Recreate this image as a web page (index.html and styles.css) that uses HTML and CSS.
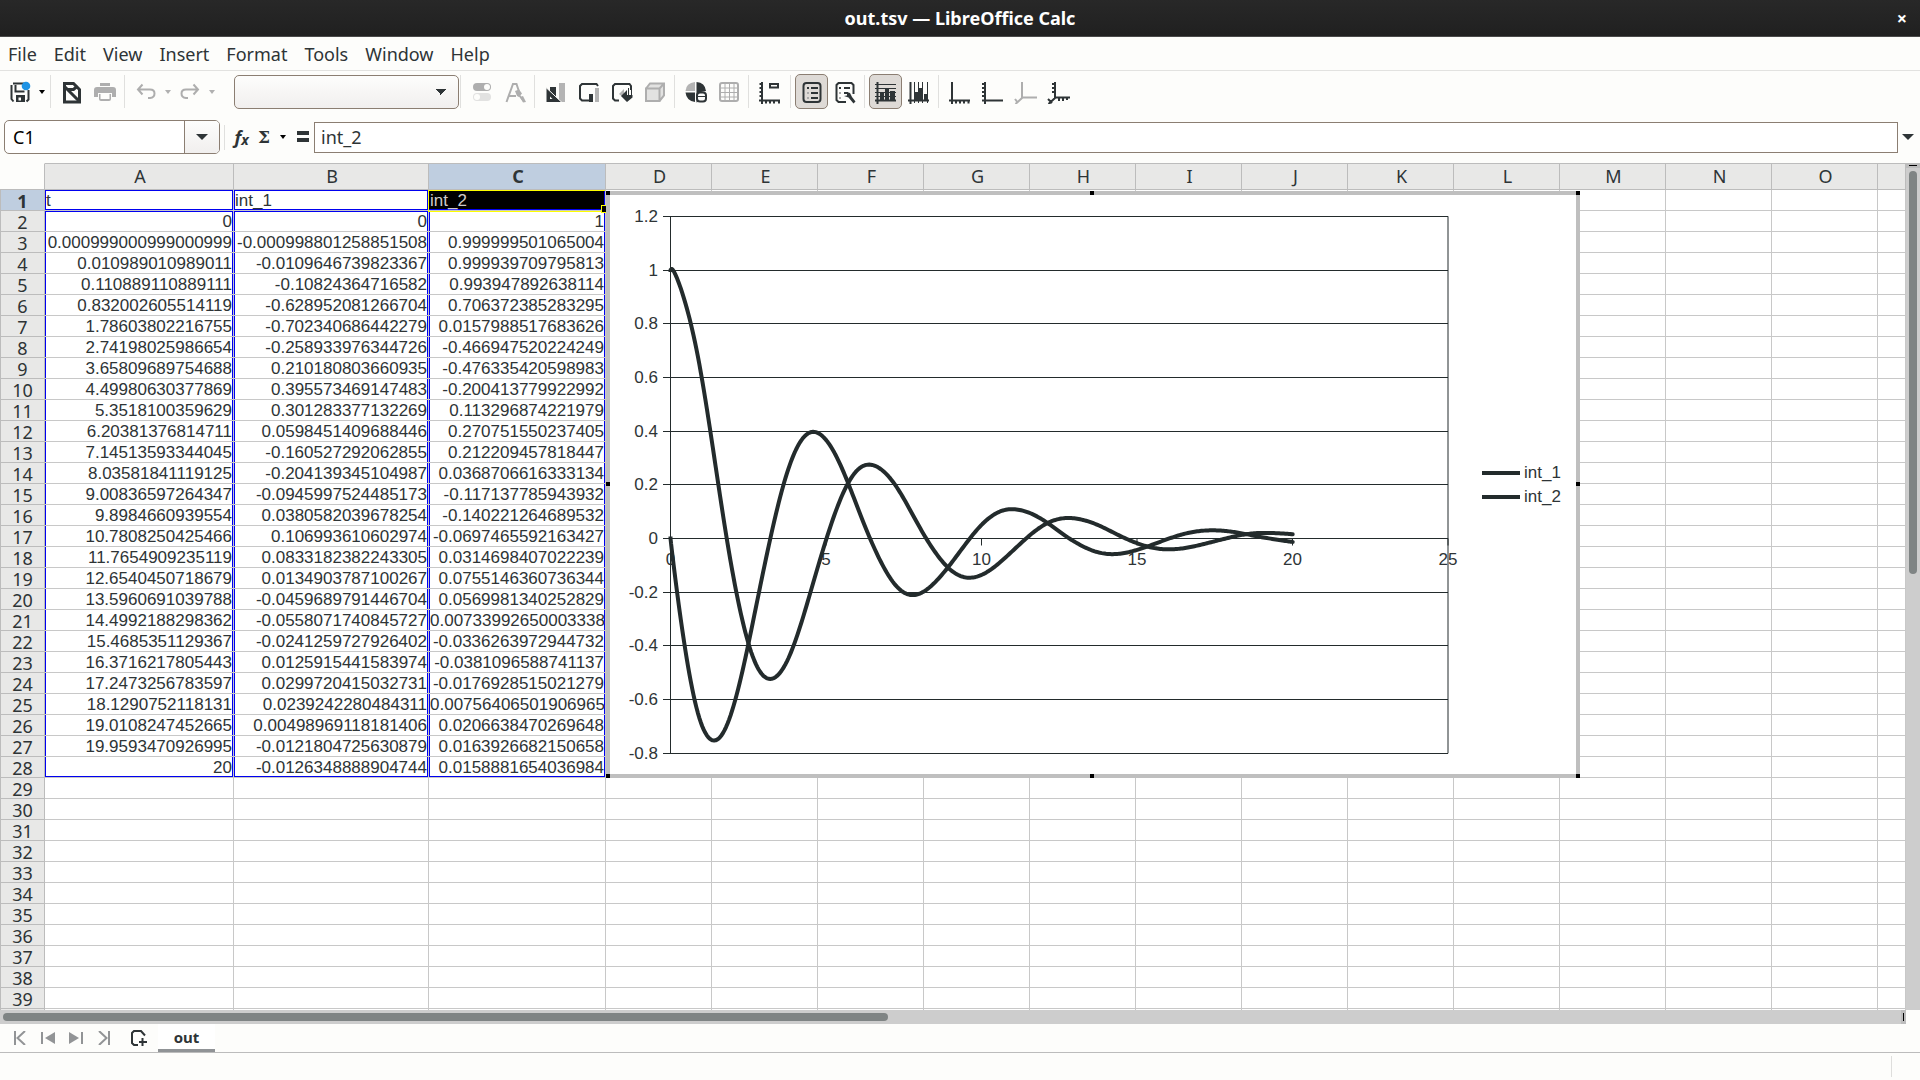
FILE: index.html
```html
<!DOCTYPE html>
<html lang="en">
<head>
<meta charset="utf-8">
<title>out.tsv — LibreOffice Calc</title>
<link rel="stylesheet" href="styles.css">
</head>
<body>
<div class="app">
  <header class="titlebar">
    <h1 class="title">out.tsv — LibreOffice Calc</h1>
    <button class="close" type="button" aria-label="Close">×</button>
  </header>

  <nav class="menubar">
    <button type="button">File</button>
    <button type="button">Edit</button>
    <button type="button">View</button>
    <button type="button">Insert</button>
    <button type="button">Format</button>
    <button type="button">Tools</button>
    <button type="button">Window</button>
    <button type="button">Help</button>
  </nav>

  <div class="toolbar">
    <button class="tool" type="button" aria-label="Save"><svg viewBox="0 0 24 24"><path d="M5 3.500h11M3.500 5v14l2 2.500M20.500 10v9.500l-2 2M7.500 5v6.500h9" class="s2"/><path d="M8 15h9v7H8z"/><path d="M10.500 17.500h2.500v3h-2.500z" class="paper"/><circle cx="18" cy="6" r="4.300" class="blue"/></svg></button>
    <button class="drop" type="button" aria-label="Save options"><i></i></button>
    <span class="sep"></span>
    <button class="tool" type="button" aria-label="Edit mode"><svg viewBox="0 0 24 24"><path d="M4.500 3.500h9l6 6v12.500H4.500z" class="s3"/><path d="M4 6l15 15M7 9.500h6.500l4-3.500" class="s3"/></svg></button>
    <button class="tool" type="button" aria-label="Print"><svg class="off" viewBox="0 0 24 24"><path d="M7 3h10v3H7zM1 10q0-3 3-3h16q3 0 3 3v7h-4v-4H5v4H1z"/><path d="M6 14h12v5q0 2-2 2H8q-2 0-2-2z"/><path d="M7.500 14h9v5h-9z" class="paper"/></svg></button>
    <span class="sep"></span>
    <button class="tool" type="button" aria-label="Undo"><svg class="off" viewBox="0 0 24 24"><path d="M8.500 4.500L4 9.500l4.500 5M4 9.500h12q4.500 0 4.500 4t-4.500 4.500h-2" class="s2"/></svg></button>
    <button class="drop off" type="button" aria-label="Undo steps"><i></i></button>
    <button class="tool" type="button" aria-label="Redo"><svg class="off" viewBox="0 0 24 24"><path d="M15.500 4.500L20 9.500l-4.500 5M20 9.500H8q-4.500 0-4.500 4t4.500 4.500h2" class="s2"/></svg></button>
    <button class="drop off" type="button" aria-label="Redo steps"><i></i></button>
    <select class="element" aria-label="Chart element"><option></option></select>
    <span class="sep thin"></span>
    <button class="tool" type="button" aria-label="Format selection"><svg class="off" viewBox="0 0 24 24"><rect x="3" y="3" width="18" height="8" rx="4"/><circle cx="17" cy="7" r="3" class="paper"/><rect x="3" y="13" width="18" height="8" rx="4" class="pale"/><circle cx="7" cy="17" r="3" class="paper"/></svg></button>
    <button class="tool" type="button" aria-label="Character"><svg class="off" viewBox="0 0 24 24"><path d="M3.500 22L10 4h3.500l3 9M6 16h7M14 12.500l7 9" class="s2"/><path d="M12 11l4-1.500 3 4-3 3.500-2-1z"/><path d="M17 17l3-1 3 6-3 .5z"/></svg></button>
    <span class="sep"></span>
    <button class="tool" type="button" aria-label="Chart type"><svg viewBox="0 0 24 24"><path d="M15 3h6v19h-6z" class="grey"/><path d="M6 7h6v12H6z"/><path d="M2 7.500L18 22.500H2z" class="edge"/><path d="M6 16.500v2.500h2.500z" class="paper"/></svg></button>
    <button class="tool" type="button" aria-label="Chart area"><svg viewBox="0 0 24 24"><path d="M12 20.500H5l-2-2V6l2-2h14.500l1.500 2" class="s2"/><path d="M12 14h4v8h-4z"/><path d="M18 8h4v14h-4z" class="grey"/></svg></button>
    <button class="tool" type="button" aria-label="Chart wall"><svg viewBox="0 0 24 24"><path d="M9 20.500H5l-2-2V6l2-2h14.500l1.500 2v4" class="s2"/><path d="M9 14l5-5v9z" class="grey"/><path d="M11 16l6-6v5h5.500v2.500L17 22z"/><path d="M18.500 8v7M21.500 9v6" class="s1"/></svg></button>
    <button class="tool" type="button" aria-label="3D view"><svg class="off" viewBox="0 0 24 24"><path d="M3 8l4-5h14v13l-4 5.500H3z" class="pale"/><path d="M3 8.500V21h13.500V8.500zL7 3.500h14v12l-4.500 5.500M16.500 8.500l4.500-5" class="s2"/></svg></button>
    <span class="sep"></span>
    <button class="tool" type="button" aria-label="Data ranges"><svg viewBox="0 0 24 24"><path d="M11 2v9H1.500Q2 3 11 2z" class="grey"/><path d="M12.500 2Q21 2.500 22 11l-5 1-1 9-3.500 1.500zM1.500 12.500h9.500v9.500Q2.500 21 1.500 12.500z"/><rect x="13" y="12.500" width="9" height="9" rx="3" class="cut"/><path d="M13 16.500h9" class="s1"/></svg></button>
    <button class="tool" type="button" aria-label="Data table"><svg class="off" viewBox="0 0 24 24"><rect x="3" y="3" width="18" height="18" rx="2" class="s2"/><path d="M3 8h18M3 12.500h18M3 17h18M8 3v18M12.500 3v18M17 3v18" class="s1"/></svg></button>
    <span class="sep"></span>
    <button class="tool" type="button" aria-label="Titles"><svg viewBox="0 0 24 24"><path d="M4 2v22M1 20.500h21" class="s2"/><path d="M1.500 4H4M1.500 8H4M1.500 12H4M1.500 16H4M8 20v3.500M12 20v3.500M16 20v3.500M21 20v3.500M12 4h8v3.500h-8z" class="s2"/></svg></button>
    <span class="sep wide"></span>
    <button class="tool on" type="button" aria-label="Legend on/off"><svg viewBox="0 0 24 24"><rect x="3.500" y="3" width="17" height="19" rx="3" class="s2"/><path d="M11 8h7M11 13h7M11 18h7M7 8h2" class="s2"/><path d="M7 13h2M7 18h2" class="s2 soft"/></svg></button>
    <button class="tool" type="button" aria-label="Legend"><svg viewBox="0 0 24 24"><path d="M13 22H5.500l-2-2V5l2-2h13l2 2v9" class="s2"/><path d="M11 8h6M11 13h4M6 8h2" class="s2"/><path d="M6 13h2M6 18h2" class="s2 soft"/><path d="M11 16l3-.5V12l3 1 2 4 3.500 4.500-2 2-5-6z"/></svg></button>
    <span class="sep"></span>
    <button class="tool on" type="button" aria-label="Horizontal grids"><svg viewBox="0 0 24 24"><path d="M3.500 2v22M1 20.500h21" class="s2"/><path d="M1 4.500h21M1 8.500h21M1 12.500h21M1 16.500h21" class="s1"/><path d="M6 12h4v9H6zM11 8h4v13h-4zM16 11h5v10h-5z"/></svg></button>
    <button class="tool" type="button" aria-label="Vertical grids"><svg viewBox="0 0 24 24"><path d="M3.500 2v22M1 20.500h21" class="s2"/><path d="M7.500 2v21M11.500 2v21M15.500 2v21M20.500 2v21" class="s1"/><path d="M7 12h4v9H7zM12 8h4v13h-4zM17 14h4v7h-4z"/></svg></button>
    <span class="sep"></span>
    <button class="tool" type="button" aria-label="X axis"><svg viewBox="0 0 24 24"><path d="M4 2v22M1 20.500h21" class="s2"/><path d="M8 20v3.500M12 20v3.500M16 20v3.500M20.500 20v3.500" class="s2"/></svg></button>
    <button class="tool" type="button" aria-label="Y axis"><svg viewBox="0 0 24 24"><path d="M4 2v22M1 20.500h21" class="s2"/><path d="M1 4h3M1 8h3M1 12h3M1 16h3" class="s2"/></svg></button>
    <button class="tool" type="button" aria-label="Z axis"><svg class="off" viewBox="0 0 24 24"><path d="M8 2v16L1.500 24M8 17.500h15M1 19l3 4" class="s2"/></svg></button>
    <button class="tool" type="button" aria-label="All axes"><svg viewBox="0 0 24 24"><path d="M8 2v16L1.500 24M8 17.500h15M1 19l4 4M5 4h3M5 8h3M5 12h3M12 17v4M16 17v4M20 17v3" class="s2"/></svg></button>
  </div>

  <div class="formulabar">
    <div class="namebox">
      <input type="text" value="C1" aria-label="Name box">
      <button type="button" aria-label="Named ranges"><i class="caret"></i></button>
    </div>
    <span class="sep"></span>
    <button class="fn fx" type="button" aria-label="Function wizard">f<small>x</small></button>
    <button class="fn sum" type="button" aria-label="Sum">Σ</button>
    <button class="drop" type="button" aria-label="Select function"><i></i></button>
    <button class="fn eq" type="button" aria-label="Formula"><svg viewBox="0 0 12 12"><path d="M0 0h12v4H0zM0 7h12v4H0z"/></svg></button>
    <input class="formula" type="text" value="int_2" aria-label="Input line">
    <button class="expand" type="button" aria-label="Expand formula bar"><i class="caret"></i></button>
  </div>

  <main class="workspace">
    <div class="sheet">
      <table class="cells">
        <colgroup id="cols"></colgroup>
        <thead><tr id="heads"></tr></thead>
        <tbody id="rows"></tbody>
      </table>
      <div class="chart">
        <svg id="plot" viewBox="0 0 974 587" role="img" aria-label="int_1 and int_2 against t"></svg>
        <b class="grip tl"></b><b class="grip tc"></b><b class="grip tr"></b>
        <b class="grip ml"></b><b class="grip mr"></b>
        <b class="grip bl"></b><b class="grip bc"></b><b class="grip br"></b>
      </div>
    </div>
    <div class="vscroll"><span class="split"></span><span class="thumb"></span></div>
  </main>
  <div class="hscroll"><span class="thumb"></span><span class="split"></span></div>

  <div class="tabs">
    <button type="button" aria-label="First sheet"><svg viewBox="0 0 14 14"><path d="M2 0v14M12 0L4.500 7l7.500 7" class="s2"/></svg></button>
    <button type="button" aria-label="Previous sheet"><svg viewBox="0 0 14 14"><path d="M1 1v12" class="s2"/><path d="M14 1v12L4 7z"/></svg></button>
    <button type="button" aria-label="Next sheet"><svg viewBox="0 0 14 14"><path d="M13 1v12" class="s2"/><path d="M0 1v12l10-6z"/></svg></button>
    <button type="button" aria-label="Last sheet"><svg viewBox="0 0 14 14"><path d="M12 0v14M2 0l7.500 7L2 14" class="s2"/></svg></button>
    <button class="add" type="button" aria-label="Add sheet"><svg viewBox="0 0 16 16"><path d="M7 15H3l-2-2V3l2-2h7l4 4.500M11.500 8v8M8 12h8" class="s2"/></svg></button>
    <button class="tab" type="button">out</button>
  </div>
  <footer class="status"><span></span></footer>
</div>
<script src="sheet.js"></script>
</body>
</html>
```
FILE: styles.css
```css
* { box-sizing: border-box; }
body { margin: 0; background: #fdfdfb; color: #2e3436; font: 18px/24px "Noto Sans", sans-serif; }
button, input, select { margin: 0; padding: 0; border: 0; border-radius: 0; background: none; color: inherit; font: inherit; }
button { display: flex; align-items: center; justify-content: center; flex: none; }
.app { display: flex; flex-direction: column; height: 100vh; min-height: 400px; overflow: hidden; }

.titlebar { position: relative; display: flex; align-items: center; justify-content: center; height: 37px; flex: none;
  background: linear-gradient(#282828, #202020); border-bottom: 1px solid #4a4a4a; color: #fff; }
.title { margin: 0; font-size: 18px; line-height: 24px; font-weight: 700; }
.close { position: absolute; right: 10px; top: 6px; width: 16px; height: 24px; font-weight: 700; }

.menubar { display: flex; gap: 17px; height: 34px; padding: 0 8px; flex: none; border-bottom: 1px solid #e2e2e0; }

.toolbar { display: flex; align-items: center; height: 43px; padding: 0 0 2px 3px; flex: none; }
.tool { width: 33px; height: 35px; }
.tool svg { width: 24px; height: 24px; }
.tool.on { border: 1px solid #8b7e72; border-radius: 5px; background: #dedad6; }
.drop { width: 11px; height: 34px; }
.drop i { border: 3px solid transparent; border-top: 4px solid #000; border-bottom: 0; }
.drop.off i { border-top-color: #b0b0b0; }
.sep { width: 1px; height: 33px; margin: 0 4px 0 3px; background: #e0e0de; flex: none; }
.sep.thin { margin: 0 4px 0 1px; }
.sep.wide { margin: 0 4px; }
.element { width: 225px; height: 34px; margin-left: 17px; flex: none; appearance: none; border: 1px solid #8b7e72; border-radius: 5px;
  background-image: linear-gradient(to bottom right, #2e3436 50%, transparent 50%), linear-gradient(to bottom left, #2e3436 50%, transparent 50%), linear-gradient(#fdfdfc, #f1efee);
  background-size: 6px 6px, 6px 6px, 100% 100%; background-repeat: no-repeat; background-position: right 11px center, right 17px center, 0 0; }

/* Icons */
svg { display: block; fill: #2e3436; stroke: none; }
svg .s1, svg .s2, svg .s3 { fill: none; stroke: #2e3436; stroke-width: 1; }
svg .s2 { stroke-width: 2; }
svg .s3 { stroke-width: 3; }
svg .soft { stroke: #aaa; }
svg .grey { fill: #b4b4b4; }
svg .pale { fill: #e2e2e1; }
svg .paper { fill: #fdfdfb; }
svg .blue { fill: #1e93e4; }
svg .edge { stroke: #fdfdfb; stroke-width: 1; }
svg .cut { fill: #fdfdfb; stroke: #2e3436; stroke-width: 2; }
svg.off { fill: #aeaeae; }
svg.off .s1, svg.off .s2 { stroke: #aeaeae; }
.caret { width: 0; height: 0; border: 6px solid transparent; border-top-color: #2e3436; border-bottom: 0; }

.formulabar { display: flex; align-items: center; height: 49px; padding: 0 3px 3px 4px; flex: none; }
.namebox { display: flex; width: 216px; height: 34px; flex: none; border: 1px solid #8b7e72; border-radius: 5px; background: #fff; overflow: hidden; }
.namebox input { flex: 1; min-width: 0; padding-left: 8px; color: #000; }
.namebox button { width: 35px; border-left: 1px solid #8b7e72; background: linear-gradient(#fdfdfc, #f1efee); }
.formulabar .sep { height: 25px; margin: 0 4px; }
.fn { font-weight: 700; }
.fx { width: 25px; font-style: italic; }
.fx small { font-size: 14px; line-height: 14px; padding-top: 6px; }
.sum { width: 20px; font-family: "DejaVu Serif", serif; font-size: 17px; }
.formulabar .drop { width: 18px; }
.eq { width: 22px; }
.eq svg { width: 12px; height: 12px; }
.formula { flex: 1; min-width: 0; height: 31px; padding: 0 6px; border: 1px solid #8b7e72; background: #fff; }
.expand { width: 19px; height: 31px; }

.workspace { display: flex; flex: 1; min-height: 0; }
.sheet { position: relative; flex: 1; min-width: 0; overflow: hidden; background: #fff; }
.cells { width: 100%; table-layout: fixed; border-spacing: 0; }
.cells .narrow { width: 45px; }
.cells .a { width: 189px; }
.cells .b { width: 195px; }
.cells .c { width: 177px; }
.cells .std { width: 106px; }
.cells th { padding: 0; background: #e8e8e7; border: 0 solid #bcbcbc; border-width: 0 1px 1px 0; font-weight: 400; }
.cells thead th { height: 27px; padding: 0 0 0 2px; line-height: 23px; border-top-width: 1px; }
.cells thead th:first-child { border-top-color: #fdfdfb; background: #fdfdfb; }
.cells tbody th { height: 21px; padding-top: 2px; line-height: 18px; border-left-width: 1px; }
.cells th.current { background: #bfcee0; font-weight: 700; }
.cells td { position: relative; height: 21px; padding: 2px 1px 0; border: 0 solid #c8c8c8; border-width: 0 1px 1px 0; text-align: right; white-space: nowrap;
  font: 17px/18px "Liberation Sans", Arial, sans-serif; }
.cells td.label { text-align: left; box-shadow: inset 0 0 0 1px #0000f0; }
.cells td.value { box-shadow: inset 1px 0 #0000f0, inset -1px 0 #0000f0; }
.cells td.value.first { box-shadow: inset 1px 0 #0000f0, inset -1px 0 #0000f0, inset 0 1px #0000f0; }
.cells td.value.last { box-shadow: inset 1px 0 #0000f0, inset -1px 0 #0000f0, inset 0 -1px #0000f0; }
.cells td.cursor { background: #000; color: #d0cbc9; box-shadow: inset -1px -1px #0000f0; }
.cells td.cursor::before { content: ""; position: absolute; z-index: 1; inset: 0 0 -2px -1px; border: 1px solid #ff0; border-right: 0; }
.cells td.cursor::after { content: ""; position: absolute; z-index: 2; right: -1px; bottom: -3px; width: 4px; height: 6px; border: 1px solid #ff0; border-right: 0; background: #000; }

.chart { position: absolute; z-index: 3; left: 606px; top: 28px; background: #fff; box-shadow: inset 0 0 0 4px #bfbfbf; }
.chart svg { width: 974px; height: 587px; fill: none; }
.chart line, .chart path { stroke: #232b2c; }
.chart path { stroke-width: 4; stroke-linecap: square; stroke-linejoin: round; }
.chart line.key { stroke-width: 4; }
.chart text { fill: #2e3436; font: 17px "Liberation Sans", Arial, sans-serif; }
.chart .end { text-anchor: end; }
.chart .mid { text-anchor: middle; }
.grip { position: absolute; width: 4px; height: 4px; background: #000; }
.tl, .tc, .tr { top: 0; }
.ml, .mr { top: calc(50% - 3px); }
.bl, .bc, .br { bottom: 0; }
.tl, .ml, .bl { left: 0; }
.tc, .bc { left: calc(50% - 3px); }
.tr, .mr, .br { right: 0; }

.vscroll { display: flex; flex-direction: column; align-items: center; width: 14px; flex: none; background: #cdcdcd; }
.vscroll .split { width: 14px; height: 5px; margin-bottom: 3px; border: solid #bdbdbd; border-width: 2px 3px; background: #000; }
.thumb { border-radius: 4px; background: #7f8484; }
.vscroll .thumb { width: 8px; height: 47.6%; }
.hscroll { display: flex; align-items: center; justify-content: space-between; height: 14px; margin-right: 14px; padding-left: 3px; flex: none; background: #cdcdcd; }
.hscroll .thumb { width: 46.5%; height: 8px; }
.hscroll .split { width: 5px; height: 14px; border: solid #bdbdbd; border-width: 3px 2px; background: #000; }

.tabs { display: flex; align-items: center; height: 29px; padding-left: 13px; gap: 14px; flex: none; border-bottom: 1px solid #bcbcbc; }
.tabs svg { width: 14px; height: 14px; fill: #929496; }
.tabs svg .s2 { stroke: #929496; }
.tabs .add { margin-left: 6px; }
.tabs .add svg { width: 16px; height: 16px; }
.tabs .add svg .s2 { stroke: #2e3436; }
.tabs .tab { width: 57px; height: 28px; margin-left: -3px; border-bottom: 3px solid #909396; background: #fff; font-size: 15px; font-weight: 700; }
.status { display: flex; justify-content: flex-end; height: 27px; padding: 3px 28px 3px 0; flex: none; }
.status span { width: 1px; background: #dededc; }
```
FILE: sheet.js
```js
const table = [
  ["t", "int_1", "int_2"],
  ["0", "0", "1"],
  ["0.000999000999000999", "-0.000998801258851508", "0.999999501065004"],
  ["0.010989010989011", "-0.0109646739823367", "0.999939709795813"],
  ["0.110889110889111", "-0.10824364716582", "0.993947892638114"],
  ["0.832002605514119", "-0.628952081266704", "0.706372385283295"],
  ["1.78603802216755", "-0.702340686442279", "0.0157988517683626"],
  ["2.74198025986654", "-0.258933976344726", "-0.466947520224249"],
  ["3.65809689754688", "0.210180803660935", "-0.476335420598983"],
  ["4.49980630377869", "0.395573469147483", "-0.200413779922992"],
  ["5.3518100359629", "0.301283377132269", "0.113296874221979"],
  ["6.20381376814711", "0.0598451409688446", "0.270751550237405"],
  ["7.14513593344045", "-0.160527292062855", "0.212209457818447"],
  ["8.03581841119125", "-0.204139345104987", "0.0368706616333134"],
  ["9.00836597264347", "-0.0945997524485173", "-0.117137785943932"],
  ["9.8984660939554", "0.0380582039678254", "-0.140221264689532"],
  ["10.7808250425466", "0.106993610602974", "-0.0697465592163427"],
  ["11.7654909235119", "0.0833182382243305", "0.0314698407022239"],
  ["12.6540450718679", "0.0134903787100267", "0.0755146360736344"],
  ["13.5960691039788", "-0.0459689791446704", "0.0569981340252829"],
  ["14.4992188298362", "-0.0558071740845727", "0.00733992650003338"],
  ["15.4685351129367", "-0.0241259727926402", "-0.0336263972944732"],
  ["16.3716217805443", "0.0125915441583974", "-0.0381096588741137"],
  ["17.2473256783597", "0.0299720415032731", "-0.0176928515021279"],
  ["18.1290752118131", "0.0239242280484311", "0.00756406501906965"],
  ["19.0108247452665", "0.00498969118181406", "0.0206638470269648"],
  ["19.9593470926995", "-0.0121804725630879", "0.0163926682150658"],
  ["20", "-0.0126348888904744", "0.0158881654036984"]
];

// Grid: row header, columns A to O, and the cut-off column at the right edge.
const names = [..."ABCDEFGHIJKLMNO", ""];
const widths = ["narrow", "a", "b", "c", ...Array(12).fill("std"), ""];
document.getElementById("cols").innerHTML = widths.map(w => `<col class="${w}">`).join("");
document.getElementById("heads").innerHTML = "<th></th>" +
  names.map(n => `<th${n === "C" ? ' class="current"' : ""}>${n}</th>`).join("");

const cellClass = (r, c) => {
  if (r === 0) return c === 2 ? "label cursor" : "label";
  return "value" + (r === 1 ? " first" : "") + (r === table.length - 1 ? " last" : "");
};
let body = "";
for (let r = 0; r < 40; r++) {
  body += `<tr><th${r === 0 ? ' class="current"' : ""}>${r < 39 ? r + 1 : ""}</th>`;
  for (let c = 0; c < names.length; c++) {
    body += table[r] && c < 3 ? `<td class="${cellClass(r, c)}">${table[r][c]}</td>` : "<td></td>";
  }
  body += "</tr>";
}
document.getElementById("rows").innerHTML = body;

// Chart: gridlines, axes and two smoothed series.
const X = t => 64.5 + t * 31.1;
const Y = v => 347.5 - v * 268.5;
const line = (x1, y1, x2, y2, k = "") => `<line class="${k}" x1="${x1}" y1="${y1}" x2="${x2}" y2="${y2}"/>`;
const text = (x, y, k, s) => `<text class="${k}" x="${x}" y="${y}">${s}</text>`;
let svg = "";
for (let i = -4; i <= 6; i++) {
  const y = Math.floor(Y(i / 5)) + 0.5;
  svg += line(57, y, X(25), y) + text(52, y + 5, "end", String(i / 5));
}
svg += line(X(0), Y(1.2), X(0), Y(-0.8)) + line(X(25), Y(1.2), X(25), Y(-0.8));
for (let t = 0; t <= 25; t += 5) {
  svg += line(X(t), Y(0), X(t), Y(0) + 7) + text(X(t), 374, "mid", t);
}

// Second derivatives of the natural cubic spline through (s, v).
function secondDerivs(s, v) {
  const n = s.length, m = Array(n).fill(0), u = Array(n).fill(0);
  for (let i = 1; i < n - 1; i++) {
    const g = (s[i] - s[i - 1]) / (s[i + 1] - s[i - 1]);
    const p = g * m[i - 1] + 2;
    m[i] = (g - 1) / p;
    const d = (v[i + 1] - v[i]) / (s[i + 1] - s[i]) - (v[i] - v[i - 1]) / (s[i] - s[i - 1]);
    u[i] = (6 * d / (s[i + 1] - s[i - 1]) - g * u[i - 1]) / p;
  }
  m[n - 1] = 0;
  for (let i = n - 2; i >= 0; i--) m[i] = m[i] * m[i + 1] + u[i];
  return m;
}
// Smooth parametric curve through one series; steps grow with the fourth root of the chord.
function curve(col) {
  const x = table.slice(1).map(r => +r[0]), y = table.slice(1).map(r => +r[col]);
  const s = [0];
  for (let i = 1; i < x.length; i++) s.push(s[i - 1] + Math.hypot(x[i] - x[i - 1], y[i] - y[i - 1]) ** 0.25);
  const mx = secondDerivs(s, x), my = secondDerivs(s, y);
  const at = (v, m, i, b) => {
    const a = 1 - b, h = s[i + 1] - s[i];
    return a * v[i] + b * v[i + 1] + ((a * a * a - a) * m[i] + (b * b * b - b) * m[i + 1]) * h * h / 6;
  };
  let d = `M${X(x[0])} ${Y(y[0])}`;
  for (let i = 0; i < x.length - 1; i++) {
    for (let k = 1; k <= 20; k++) {
      d += `L${X(at(x, mx, i, k / 20)).toFixed(2)} ${Y(at(y, my, i, k / 20)).toFixed(2)}`;
    }
  }
  return `<path d="${d}"/>`;
}
svg += curve(1) + curve(2);
svg += line(876, 282, 914, 282, "key") + text(918, 287, "", "int_1");
svg += line(876, 306, 914, 306, "key") + text(918, 311, "", "int_2");
document.getElementById("plot").innerHTML = svg;
```
